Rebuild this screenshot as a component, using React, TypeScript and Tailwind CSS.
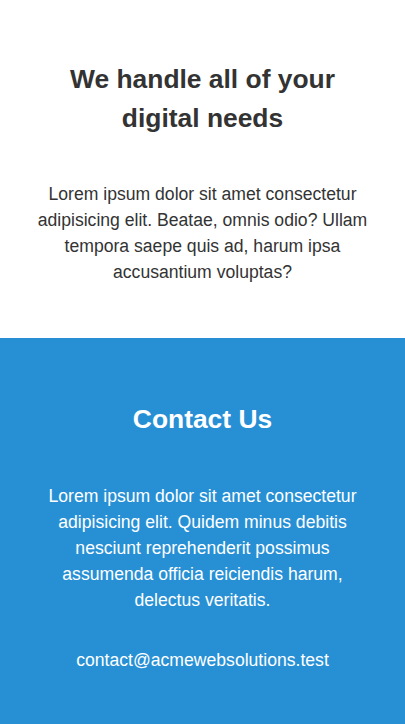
export default function App() {
  return (
    <div className="w-full font-['Liberation_Sans',Arial,sans-serif]">
      <section className="bg-white px-8 pt-[60px] pb-[53px] text-center text-[#333333]">
        <h2 className="mx-auto text-[26.4px] font-bold leading-[39px]">
          We handle all of your
          <br />
          digital needs
        </h2>
        <p className="mt-[43px] text-[17.6px] leading-[26px]">
          Lorem ipsum dolor sit amet consectetur adipisicing elit. Beatae, omnis odio? Ullam tempora saepe quis ad,
          harum ipsa accusantium voluptas?
        </p>
      </section>
      <section className="bg-[#2790d5] px-8 pt-[62px] pb-[51px] text-center text-white">
        <h2 className="text-[26.4px] font-bold leading-[39px]">Contact Us</h2>
        <p className="mt-[44px] text-[17.6px] leading-[26px]">
          Lorem ipsum dolor sit amet consectetur adipisicing elit. Quidem minus debitis nesciunt reprehenderit possimus
          assumenda officia reiciendis harum, delectus veritatis.
        </p>
        <p className="mt-[34px] text-[17.6px] leading-[26px]">contact@acmewebsolutions.test</p>
      </section>
    </div>
  );
}
